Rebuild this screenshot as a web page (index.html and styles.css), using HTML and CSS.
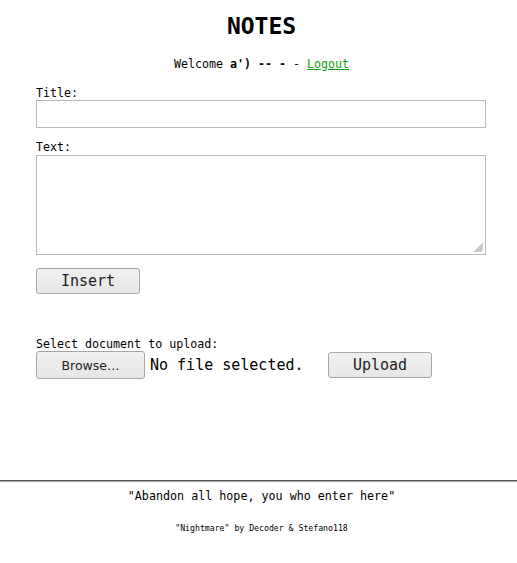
FILE: index.html
```html
<!DOCTYPE html>
<html>
<head>
<meta charset="utf-8">
<title>Notes</title>
<link rel="stylesheet" href="styles.css">
</head>
<body>
<div class="page">
  <h1 class="title">NOTES</h1>
  <p class="welcome">Welcome <b>a') -- -</b> - <a href="#" class="logout">Logout</a></p>
  <form class="note-form">
    <label class="lbl" for="t">Title:</label>
    <input class="txt" id="t" type="text">
    <label class="lbl" for="x">Text:</label>
    <div class="area-wrap">
      <textarea class="area" id="x"></textarea>
      <svg class="grip" width="12" height="12" viewBox="0 0 12 12">
        <path d="M11 2 L2 11 M11 5 L5 11 M11 8 L8 11 M11 3.5 L3.5 11 M11 6.5 L6.5 11" stroke="#999" stroke-width="0.8" fill="none"/>
      </svg>
    </div>
    <button type="button" class="btn">Insert</button>
  </form>
  <form class="upload-form">
    <div class="lbl">Select document to upload:</div>
    <div class="upload-row">
      <span class="browse">Browse…</span>
      <span class="nofile">No file selected.</span>
      <button type="button" class="btn upload">Upload</button>
    </div>
  </form>
</div>
<footer class="footer">
  <p class="quote">"Abandon all hope, you who enter here"</p>
  <p class="credits">"Nightmare" by Decoder &amp; Stefano118</p>
</footer>
</body>
</html>
```
FILE: styles.css
```css
html, body {
  margin: 0;
  padding: 0;
  background: #fff;
}
body {
  font-family: "DejaVu Sans Mono", monospace;
  color: #000;
  width: 517px;
}
.page {
  height: 480px;
  box-sizing: border-box;
  padding: 13px 31px 0 36px;
}
.title {
  margin: 0 -31px 17px -30px;
  font-size: 23px;
  line-height: 27px;
  text-align: center;
  font-weight: bold;
}
.welcome {
  margin: 0 -31px 15px -30px;
  font-size: 11.65px;
  line-height: 14px;
  text-align: center;
}
.welcome b {
  font-weight: bold;
}
.logout {
  color: #11a011;
  text-decoration: underline;
}
.lbl {
  display: block;
  font-size: 11.65px;
  line-height: 14px;
  height: 14px;
}
.note-form {
  margin: 0;
}
.txt {
  display: block;
  box-sizing: border-box;
  width: 450px;
  height: 28px;
  margin: 0 0 12px 0;
  border: 1px solid #bbb;
  padding: 0 4px;
  background: #fff;
  outline: none;
}
.area-wrap {
  position: relative;
  margin-top: 1px;
  width: 450px;
  height: 100px;
}
.area {
  display: block;
  box-sizing: border-box;
  width: 450px;
  height: 100px;
  border: 1px solid #bbb;
  margin: 0;
  padding: 2px;
  resize: none;
  background: #fff;
  outline: none;
}
.grip {
  position: absolute;
  right: 2px;
  bottom: 2px;
}
.btn {
  display: block;
  box-sizing: border-box;
  width: 104px;
  height: 26px;
  margin: 13px 0 0 0;
  padding: 0;
  font-family: "DejaVu Sans Mono", monospace;
  font-size: 15px;
  color: #222;
  background: linear-gradient(#f0f0f0, #e6e6e6);
  border: 1px solid #a6a6a6;
  border-radius: 3px;
}
.upload-form {
  margin: 43px 0 0 0;
}
.upload-row {
  display: flex;
  align-items: center;
  height: 28px;
}
.browse {
  box-sizing: border-box;
  width: 109px;
  height: 28px;
  display: flex;
  align-items: center;
  justify-content: center;
  font-family: "DejaVu Sans", sans-serif;
  font-size: 12.5px;
  color: #222;
  background: linear-gradient(#f0f0f0, #e6e6e6);
  border: 1px solid #a6a6a6;
  border-radius: 3px;
}
.nofile {
  margin-left: 5px;
  font-size: 15px;
  color: #000;
  width: 178px;
}
.upload {
  margin: 0;
}
.footer {
  border-top: 1px solid #555;
  box-shadow: 0 1px 0 #aaa inset;
  height: 83px;
  box-sizing: border-box;
  padding: 7px 0 0 6px;
  text-align: center;
}
.quote {
  margin: 0;
  font-size: 11.7px;
  line-height: 16px;
}
.credits {
  margin: 19px 0 0 0;
  font-size: 8.2px;
  line-height: 10px;
}
```
